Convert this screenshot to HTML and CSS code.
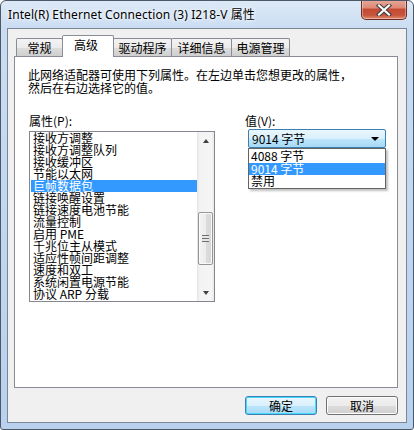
FILE: index.html
```html
<!DOCTYPE html>
<html lang="zh-CN">
<head>
<meta charset="utf-8">
<title>属性</title>
<link rel="stylesheet" href="styles.css">
</head>
<body>
<div class="window">
  <div class="titlebar">
    <span class="title">Intel(R) Ethernet Connection (3) I218-V 属性</span>
    <div class="close">
      <svg width="20" height="12" viewBox="0 0 20 12">
        <path d="M5 1.5 L15 10.5 M15 1.5 L5 10.5" stroke="#3b3b3b" stroke-width="4.2" stroke-linecap="square"/>
        <path d="M5 1.5 L15 10.5 M15 1.5 L5 10.5" stroke="#ffffff" stroke-width="2.2" stroke-linecap="square"/>
      </svg>
    </div>
  </div>
  <div class="client">
    <div class="tabs">
      <div class="tab t1">常规</div>
      <div class="tab t2 active">高级</div>
      <div class="tab t3">驱动程序</div>
      <div class="tab t4">详细信息</div>
      <div class="tab t5">电源管理</div>
    </div>
    <div class="panel">
      <p class="desc">此网络适配器可使用下列属性。在左边单击您想更改的属性，<br>然后在右边选择它的值。</p>
      <div class="cols">
        <div class="col-left">
          <div class="label">属性(P):</div>
          <div class="listbox">
            <ul class="items">
              <li>接收方调整</li>
              <li>接收方调整队列</li>
              <li>接收缓冲区</li>
              <li>节能以太网</li>
              <li class="sel">巨帧数据包</li>
              <li>链接唤醒设置</li>
              <li>链接速度电池节能</li>
              <li>流量控制</li>
              <li>启用 PME</li>
              <li>千兆位主从模式</li>
              <li>适应性帧间距调整</li>
              <li>速度和双工</li>
              <li>系统闲置电源节能</li>
              <li>协议 ARP 分载</li>
            </ul>
            <div class="scrollbar">
              <div class="sb-btn"><span class="arr up"></span></div>
              <div class="sb-track t-top"></div>
              <div class="sb-thumb"><span class="grip"></span></div>
              <div class="sb-track t-bot"></div>
              <div class="sb-btn"><span class="arr down"></span></div>
            </div>
          </div>
        </div>
        <div class="col-right">
          <div class="label">值(V):</div>
          <div class="combo-wrap">
            <div class="combo"><span class="combo-text">9014 字节</span><span class="combo-arrow"></span></div>
            <ul class="dropdown">
              <li>4088 字节</li>
              <li class="sel">9014 字节</li>
              <li>禁用</li>
            </ul>
          </div>
        </div>
      </div>
    </div>
    <div class="buttons">
      <button class="btn default">确定</button>
      <button class="btn">取消</button>
    </div>
  </div>
</div>
</body>
</html>
```

FILE: styles.css
```css
* { box-sizing: border-box; }
html, body { margin: 0; padding: 0; }
body {
  width: 414px;
  height: 430px;
  background: #ffffff;
  font-family: "Noto Sans CJK SC", "Noto Sans", sans-serif;
  font-size: 12px;
  color: #000;
  overflow: hidden;
}
.window {
  width: 414px;
  height: 430px;
  border: 1px solid #4d5866;
  border-radius: 6px 6px 3px 3px;
  background: linear-gradient(to bottom, #dce9f7 0px, #c9dcf2 30px, #b9d1ee 100%);
  display: flex;
  flex-direction: column;
  overflow: hidden;
}
.titlebar {
  height: 27px;
  display: flex;
  align-items: flex-start;
  flex-shrink: 0;
}
.title {
  font-family: "Noto Sans", "Noto Sans CJK SC", sans-serif;
  font-size: 12px;
  line-height: 14px;
  margin: 7px 0 0 7px;
  color: #000;
  text-shadow: 0 0 6px #ffffff, 0 0 3px #ffffff;
  letter-spacing: 0.1px;
}
.close {
  margin-left: auto;
  margin-right: 6px;
  margin-top: -1px;
  width: 46px;
  height: 20px;
  border: 1px solid #6b2e24;
  border-top: none;
  border-radius: 0 0 5px 5px;
  background: linear-gradient(to bottom, #e9a99b 0%, #dd8a76 40%, #c44a33 50%, #c8553c 80%, #e08e72 100%);
  box-shadow: inset 0 0 0 1px rgba(255,255,255,0.35);
  display: flex;
  align-items: center;
  justify-content: center;
}
.client {
  margin: 0 6px;
  height: 395px;
  border: 1px solid #7a8696;
  background: #f0f0f0;
  display: flex;
  flex-direction: column;
  flex-shrink: 0;
}
.tabs {
  display: flex;
  align-items: flex-end;
  margin-top: 6px;
  margin-left: 8px;
  height: 21px;
  position: relative;
  z-index: 2;
}
.tab {
  height: 18px;
  border: 1px solid #898c95;
  border-bottom: none;
  border-radius: 2px 2px 0 0;
  background: linear-gradient(to bottom, #f3f3f3 0%, #ebebeb 50%, #dddddd 51%, #cfcfcf 100%);
  text-align: center;
  line-height: 17px;
  margin-left: -1px;
}
.tab.t1 { width: 47px; margin-left: 0; }
.tab.t2 { width: 52px; }
.tab.t3 { width: 59px; }
.tab.t4 { width: 61px; }
.tab.t5 { width: 59px; }
.tab.active {
  height: 22px;
  background: #ffffff;
  line-height: 18px;
  position: relative;
  z-index: 3;
  margin-bottom: -1px;
  padding-right: 4px;
}
.panel {
  margin-left: 6px;
  width: 384px;
  height: 332px;
  border: 1px solid #898c95;
  background: #ffffff;
  padding: 11px 0 0 13px;
  position: relative;
  z-index: 1;
}
.desc {
  margin: 0;
  line-height: 13px;
}
.cols {
  display: flex;
  margin-top: 21px;
}
.label {
  line-height: 12px;
  height: 12px;
}
.col-left {
  margin-left: 1px;
  width: 186px;
}
.col-left .listbox { margin-top: 4px; }
.col-right {
  margin-left: 30px;
}
.listbox {
  width: 186px;
  height: 171px;
  border: 1px solid #828790;
  display: flex;
  overflow: hidden;
  background: #fff;
}
.items {
  list-style: none;
  margin: 0;
  padding: 0 0 0 1px;
  width: 167px;
  overflow: hidden;
}
.items li {
  height: 12px;
  line-height: 12px;
  padding-left: 2px;
  white-space: nowrap;
}
.items li.sel, .dropdown li.sel {
  background: #3399ff;
  color: #ffffff;
}
.scrollbar {
  width: 17px;
  display: flex;
  flex-direction: column;
  background: linear-gradient(to right, #e3e3e3 0%, #f3f3f3 15%, #f5f5f5 85%, #e8e8e8 100%);
}
.sb-btn {
  height: 17px;
  display: flex;
  align-items: center;
  justify-content: center;
}
.sb-track.t-top { height: 63px; }
.sb-track.t-bot { height: 19px; }
.arr {
  width: 0;
  height: 0;
  border-left: 3.5px solid transparent;
  border-right: 3.5px solid transparent;
}
.arr.up { border-bottom: 4px solid #404040; }
.arr.down { border-top: 4px solid #404040; }
.sb-thumb {
  height: 53px;
  margin: 0 1px;
  border: 1px solid #959595;
  border-radius: 2px;
  background: linear-gradient(to right, #f4f4f4 0%, #ececec 50%, #dcdcdc 51%, #d6d6d6 100%);
  box-shadow: inset 0 0 0 1px #fafafa;
  display: flex;
  align-items: center;
  justify-content: center;
}
.grip {
  width: 7px;
  height: 7px;
  background: repeating-linear-gradient(to bottom, #6f6f6f 0px, #6f6f6f 1px, #e6e6e6 1px, #e6e6e6 3px);
}
.combo-wrap {
  position: relative;
  margin-left: 3px;
  margin-top: 2px;
  width: 138px;
}
.combo {
  height: 19px;
  border: 1px solid #3c7fb1;
  border-radius: 2px;
  background: linear-gradient(to bottom, #eaf6fd 0%, #d9f0fc 50%, #bee6fd 51%, #a7d9f5 100%);
  display: flex;
  align-items: center;
  padding-left: 3px;
}
.combo-text { line-height: 12px; }
.combo-arrow {
  margin-left: auto;
  margin-right: 6px;
  width: 0;
  height: 0;
  border-left: 4px solid transparent;
  border-right: 4px solid transparent;
  border-top: 4px solid #000;
}
.dropdown {
  position: absolute;
  top: 19px;
  left: 0;
  width: 138px;
  margin: 0;
  padding: 1px 0 0 0;
  list-style: none;
  border: 1px solid #646464;
  background: #ffffff;
  box-shadow: 2px 2px 2px rgba(0,0,0,0.25);
}
.dropdown li {
  height: 12.5px;
  line-height: 12px;
  padding-left: 2px;
}
.buttons {
  display: flex;
  justify-content: flex-end;
  gap: 9px;
  padding-right: 8px;
  margin-top: 8px;
}
.btn {
  width: 72px;
  height: 19px;
  font-family: "Noto Sans CJK SC", sans-serif;
  font-size: 12px;
  line-height: 12px;
  padding: 0;
  color: #000;
  border: 1px solid #707070;
  border-radius: 3px;
  background: linear-gradient(to bottom, #f2f2f2 0%, #ebebeb 50%, #dddddd 51%, #cfcfcf 100%);
  box-shadow: inset 0 0 0 1px #fcfcfc;
}
.btn.default {
  border-color: #3c7fb1;
  background: linear-gradient(to bottom, #eaf6fd 0%, #d9f0fc 50%, #bee6fd 51%, #a7d9f5 100%);
  box-shadow: inset 0 0 0 1px #48d8fb;
}
```
